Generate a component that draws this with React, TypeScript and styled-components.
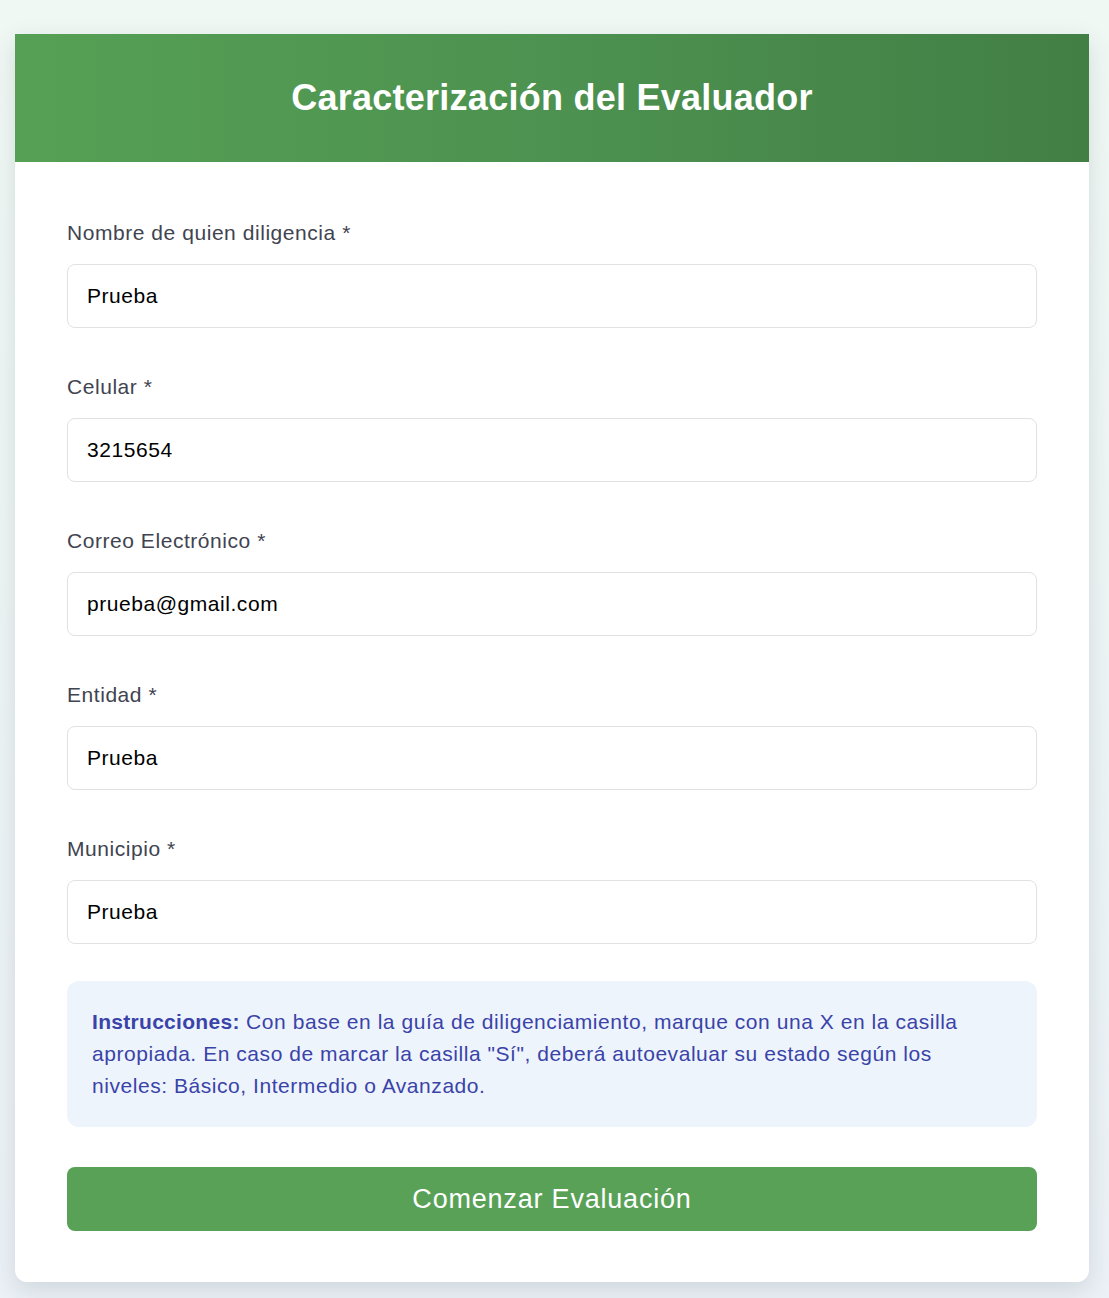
import React from "react";
import styled, { createGlobalStyle } from "styled-components";

const GlobalStyle = createGlobalStyle`
  html, body {
    margin: 0;
    padding: 0;
  }
  body {
    font-family: "Liberation Sans", Arial, sans-serif;
    background: linear-gradient(180deg, #f0f8f4 0%, #ebf1f6 100%);
    min-height: 1298px;
  }
  * { box-sizing: border-box; }
`;

const Page = styled.div`
  padding: 34px 20px 16px 15px;
`;

const Card = styled.div`
  background: #ffffff;
  border-radius: 0 0 12px 12px;
  box-shadow: 0 8px 24px rgba(40, 60, 70, 0.14);
  overflow: hidden;
`;

const Header = styled.div`
  height: 128px;
  display: flex;
  align-items: center;
  justify-content: center;
  background: linear-gradient(90deg, #56a055 0%, #4d9250 50%, #427f45 100%);
`;

const Title = styled.h1`
  margin: 0;
  color: #ffffff;
  font-size: 36px;
  font-weight: 700;
  letter-spacing: 0.25px;
`;

const Body = styled.div`
  padding: 56px 52px 51px;
  display: flex;
  flex-direction: column;
`;

const Field = styled.div`
  display: flex;
  flex-direction: column;
  margin-bottom: 44px;
`;

const Label = styled.label`
  font-size: 21px;
  line-height: 30px;
  letter-spacing: 0.55px;
  color: #3f4450;
  margin-bottom: 16px;
`;

const Input = styled.input`
  height: 64px;
  border: 1px solid #e1e1e1;
  border-radius: 8px;
  padding: 0 19px;
  font-family: "Liberation Sans", Arial, sans-serif;
  font-size: 21px;
  letter-spacing: 0.55px;
  color: #000;
  background: #fff;
  outline: none;
`;

const Notice = styled.div`
  margin-top: -7px;
  background: #eef4fc;
  border-radius: 12px;
  padding: 25px 25px;
  font-size: 21px;
  line-height: 32px;
  letter-spacing: 0.55px;
  color: #3a43a8;
`;

const Strong = styled.strong`
  font-weight: 700;
  letter-spacing: 0.3px;
`;

const Button = styled.button`
  margin-top: 40px;
  height: 64px;
  border: none;
  border-radius: 8px;
  background: #59a157;
  color: #ffffff;
  font-family: "Liberation Sans", Arial, sans-serif;
  font-size: 27px;
  letter-spacing: 0.8px;
  cursor: pointer;
`;

const fields = [
  { label: "Nombre de quien diligencia *", value: "Prueba" },
  { label: "Celular *", value: "3215654" },
  { label: "Correo Electrónico *", value: "prueba@gmail.com" },
  { label: "Entidad *", value: "Prueba" },
  { label: "Municipio *", value: "Prueba" },
];

export default function App() {
  return (
    <>
      <GlobalStyle />
      <Page>
        <Card>
          <Header>
            <Title>Caracterización del Evaluador</Title>
          </Header>
          <Body>
            {fields.map((f) => (
              <Field key={f.label}>
                <Label>{f.label}</Label>
                <Input defaultValue={f.value} />
              </Field>
            ))}
            <Notice>
              <Strong>Instrucciones:</Strong> Con base en la guía de diligenciamiento, marque con una X en la casilla
              apropiada. En caso de marcar la casilla "Sí", deberá autoevaluar su estado según los niveles: Básico,
              Intermedio o Avanzado.
            </Notice>
            <Button>Comenzar Evaluación</Button>
          </Body>
        </Card>
      </Page>
    </>
  );
}
